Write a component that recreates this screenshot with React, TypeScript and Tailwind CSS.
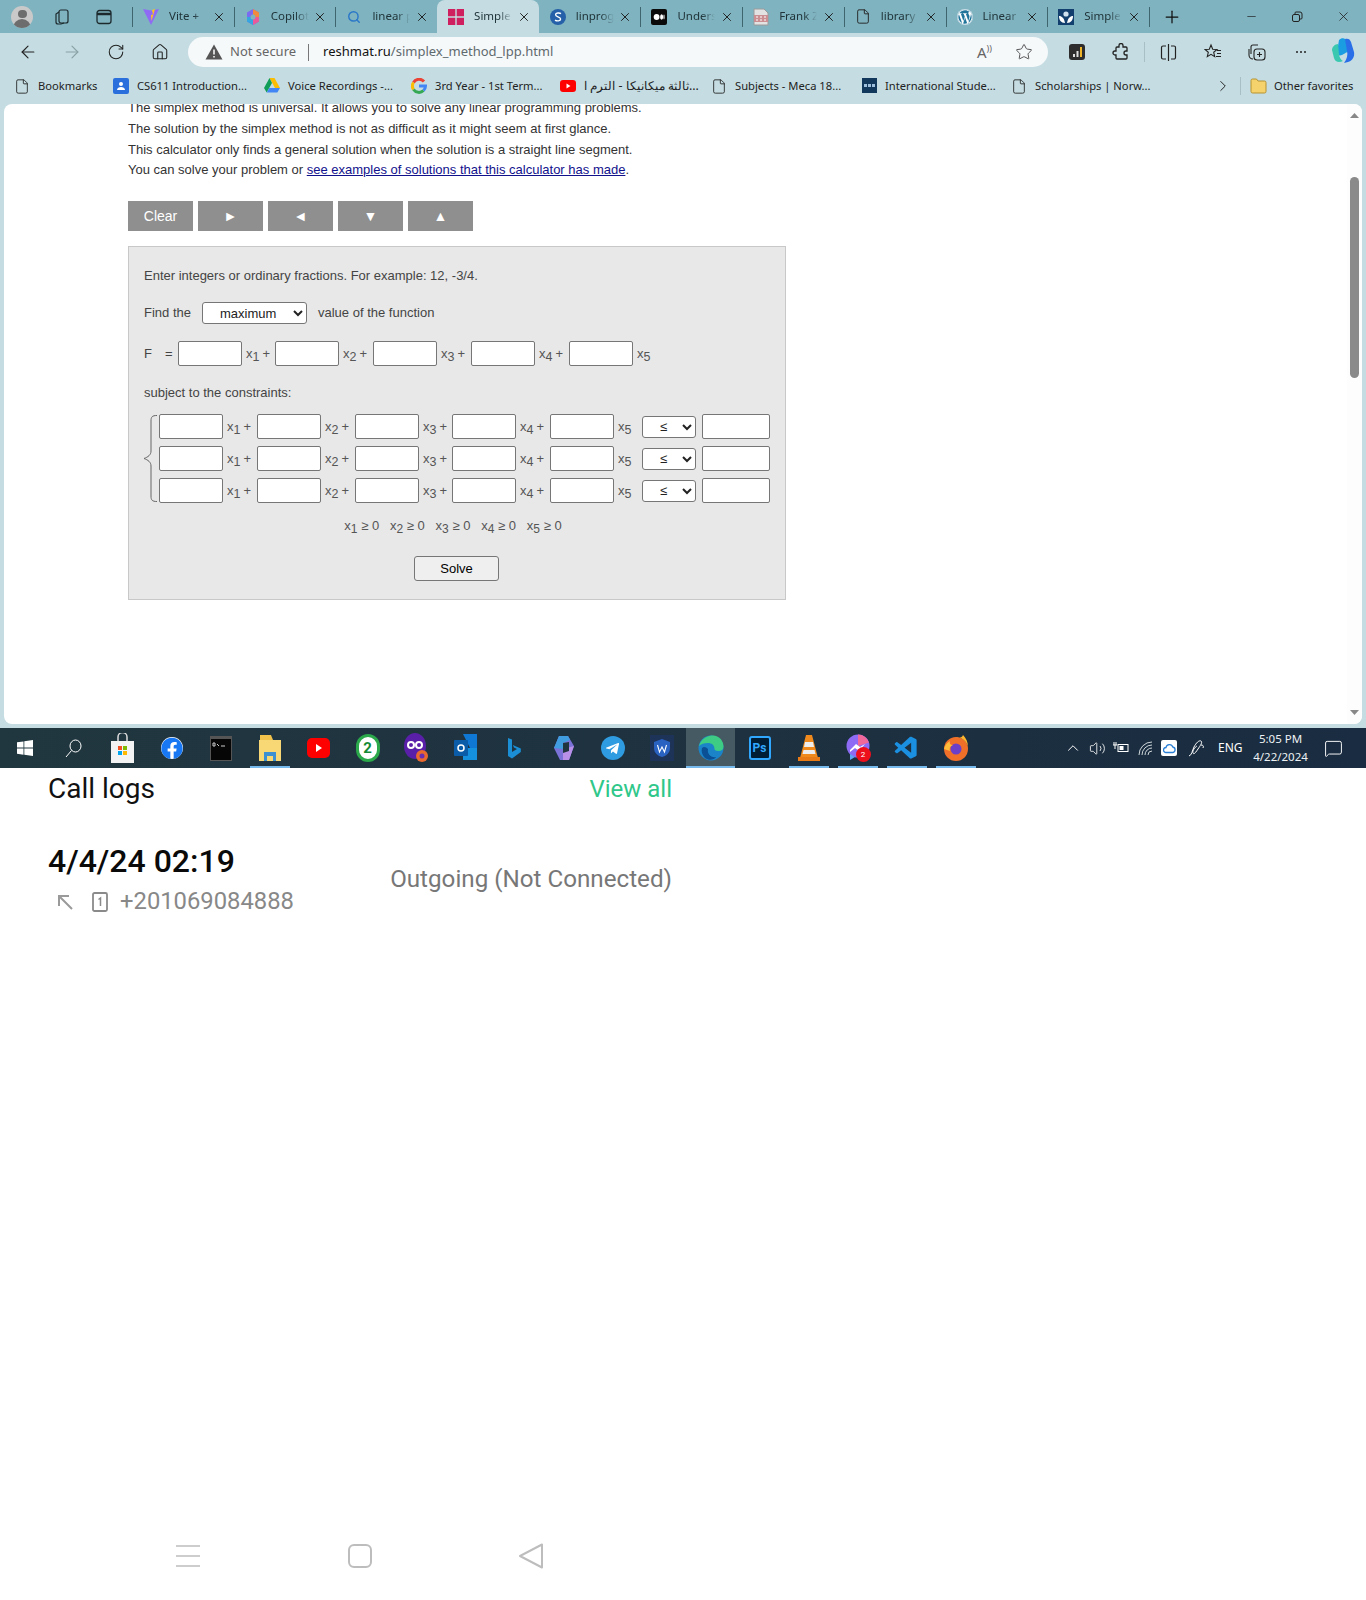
import React from "react";
import { ArrowLeft, ArrowRight, RotateCw, Home, Star, Plus, Minus, X, Search, ChevronRight, ChevronUp, File, MessageSquare, Volume2 } from "lucide-react";
import { FaFacebook, FaWordpress, FaTelegramPlane } from "react-icons/fa";
import { VscVscode } from "react-icons/vsc";

const ui = "font-['Noto_Sans',sans-serif]";

function Vite() {
  return (
    <svg width="16" height="18" viewBox="0 0 16 18">
      <path d="M0 1l8 1.5L16 1 8 17z" fill="#8f6bf5" />
      <path d="M9 2l3-1-3.5 12-.5-6 2-.5z" fill="#ffc517" />
    </svg>
  );
}
function CopilotColor({ s = 16 }: { s?: number }) {
  return (
    <svg width={s} height={s} viewBox="0 0 16 16">
      <path d="M8 0l6 3.5v9L8 16l-6-3.5v-9z" fill="#7a6bf0" />
      <path d="M8 0l6 3.5V8H8z" fill="#f08a3c" />
      <path d="M2 8h6v8l-6-3.5z" fill="#35a6e0" />
      <path d="M8 8h6v4.5L8 16z" fill="#e85a9a" />
      <circle cx="8" cy="8" r="2.5" fill="#7fb3bf" />
    </svg>
  );
}
function Squares() {
  return (
    <svg width="16" height="16" viewBox="0 0 16 16">
      <path d="M0 0h7.3v7.3H0zM8.7 0H16v7.3H8.7zM0 8.7h7.3V16H0zM8.7 8.7H16V16H8.7z" fill="#cf1f5e" />
    </svg>
  );
}
function LinProg() {
  return (
    <svg width="16" height="16" viewBox="0 0 16 16">
      <circle cx="8" cy="8" r="8" fill="#2560a8" />
      <path d="M11 4.6C9.5 3.6 5.6 3.7 5.6 5.8c0 2.4 5 1.7 5 4.3 0 2.2-3.8 2.2-5.6 1" fill="none" stroke="#fff" strokeWidth="1.4" />
    </svg>
  );
}
function Medium() {
  return (
    <svg width="16" height="16" viewBox="0 0 16 16">
      <rect width="16" height="16" rx="2" fill="#0a0a0a" />
      <ellipse cx="5.6" cy="8" rx="2.9" ry="3" fill="#fff" />
      <ellipse cx="10.6" cy="8" rx="1.5" ry="2.8" fill="#fff" />
      <ellipse cx="13" cy="8" rx=".6" ry="2.4" fill="#fff" />
    </svg>
  );
}
function Pdf() {
  return (
    <svg width="16" height="18" viewBox="0 0 16 18">
      <path d="M1 1h10l4 4v12H1z" fill="#e2e2e2" stroke="#9a9a9a" />
      <rect x="1" y="7" width="14" height="7" fill="#c98f93" />
      <path d="M3 9h2M7 9h2M11 9h2M3 12h2M7 12h2M11 12h2" stroke="#fff" />
    </svg>
  );
}
function Emblem() {
  return (
    <svg width="16" height="16" viewBox="0 0 16 16">
      <rect width="16" height="16" fill="#123f6d" />
      <path d="M1 7c3 0 5 2 6 7-4 0-6-3-6-7zM15 7c-3 0-5 2-6 7 4 0 6-3 6-7z" fill="#fff" />
      <circle cx="8" cy="5" r="2.6" fill="#cfe0ee" />
    </svg>
  );
}

const tabs: { t: string; i: React.ReactNode; active?: boolean }[] = [
  { t: "Vite +", i: <Vite /> },
  { t: "Copilot", i: <CopilotColor /> },
  { t: "linear p", i: <Search size={14} strokeWidth={2.5} color="#2b78c9" /> },
  { t: "Simple", i: <Squares />, active: true },
  { t: "linprog", i: <LinProg /> },
  { t: "Unders", i: <Medium /> },
  { t: "Frank Z", i: <Pdf /> },
  { t: "library", i: <File size={17} strokeWidth={1.4} color="#222" /> },
  { t: "Linear", i: <FaWordpress size={16} color="#21759b" className="bg-white rounded-full" /> },
  { t: "Simple", i: <Emblem /> },
];

function Tab({ t, i, active, hideSep }: { t: string; i: React.ReactNode; active?: boolean; hideSep?: boolean }) {
  return (
    <div className={`w-[101.7px] h-full flex items-center relative ${active ? "bg-[#c5dde2] rounded-t-lg" : ""}`}>
      {!hideSep && !active && <span className="w-px h-[20px] bg-[#3f666e]" />}
      <span className={`w-4 flex justify-center shrink-0 ${active || hideSep ? "ml-[11px]" : "ml-[10px]"}`}>{i}</span>
      <span className="ml-[10px] pb-[2px] w-[38px] overflow-hidden whitespace-nowrap text-[11.5px] text-[#20343a] [mask-image:linear-gradient(to_right,black_65%,transparent)]">{t}</span>
      <X size={14} strokeWidth={1.6} color="#1a1a1a" className="ml-auto mr-[8px]" />
    </div>
  );
}

function TabRow() {
  return (
    <div className={`${ui} h-[33px] bg-[#7fb3bf] flex items-center`}>
      <div className="ml-[11px] w-[22px] h-[22px] rounded-full bg-[#c9c9c9] overflow-hidden flex flex-col items-center">
        <span className="mt-[4px] w-[9px] h-[9px] rounded-full bg-[#6d6d6d]" />
        <span className="mt-[1px] w-[18px] h-[10px] rounded-t-full bg-[#6d6d6d]" />
      </div>
      <svg className="ml-[21px]" width="16" height="18" viewBox="0 0 16 18" fill="none" stroke="#1c2a2e" strokeWidth="1.2">
        <rect x="5" y="2" width="9" height="13" rx="2" />
        <path d="M5 4l-3 2v8a2 2 0 0 0 2 2h3l3-1" />
      </svg>
      <svg className="ml-[26px]" width="16" height="16" viewBox="0 0 16 16" fill="none" stroke="#1c2a2e" strokeWidth="1.3">
        <rect x="1" y="1.5" width="14" height="13" rx="2.5" />
        <path d="M1 5h14" strokeWidth="2.5" />
      </svg>
      <div className="ml-[20px] flex h-full">
        {tabs.map((x, n) => (
          <Tab key={n} {...x} hideSep={n === 4} />
        ))}
      </div>
      <span className="w-px h-[20px] bg-[#3f666e]" />
      <Plus size={20} strokeWidth={1.5} color="#111" className="ml-[12px]" />
      <Minus size={13} strokeWidth={1.3} color="#222" className="ml-[63px]" />
      <svg className="ml-[33px]" width="12" height="12" viewBox="0 0 12 12" fill="none" stroke="#222">
        <rect x="1.5" y="3.5" width="7" height="7" rx="1.5" />
        <path d="M4 3V2a1 1 0 0 1 1-1h4a2 2 0 0 1 2 2v4a1 1 0 0 1-1 1H9" />
      </svg>
      <X size={15} strokeWidth={1.3} color="#222" className="ml-[33px]" />
    </div>
  );
}

function AddressRow() {
  return (
    <div className={`${ui} h-[38px] flex items-center text-[#333]`}>
      <ArrowLeft size={20} strokeWidth={1.4} color="#222" className="ml-[18px]" />
      <ArrowRight size={20} strokeWidth={1.4} color="#8aa0a5" className="ml-[24px]" />
      <RotateCw size={18} strokeWidth={1.4} color="#222" className="ml-[25px]" />
      <Home size={18} strokeWidth={1.4} color="#222" className="ml-[26px]" />
      <div className="ml-[19px] w-[860px] h-[30px] rounded-full bg-[#f6f9fa] flex items-center">
        <svg className="ml-[17px]" width="18" height="16" viewBox="0 0 18 16">
          <path d="M9 .5L17.5 15.5H.5z" fill="#555" />
          <path d="M9 5.5v5M9 12v1.6" stroke="#fff" strokeWidth="1.5" />
        </svg>
        <span className="ml-[7px] text-[13px] text-[#666]">Not secure</span>
        <span className="ml-[12px] w-px h-[17px] bg-[#777]" />
        <span className="ml-[14px] text-[13px] text-[#5f6a6e]"><span className="text-[#111]">reshmat.ru</span>/simplex_method_lpp.html</span>
        <span className="ml-auto text-[15px] text-[#666] leading-none">A<span className="text-[9px] align-super">))</span></span>
        <Star size={18} strokeWidth={1.2} color="#444" className="ml-[23px] mr-[15px]" />
      </div>
      <svg className="ml-[21px]" width="16" height="18" viewBox="0 0 16 18">
        <rect y="1" width="16" height="16" rx="3" fill="#2d2d2d" />
        <path d="M4 11h2v3H4zM7.5 8h2v6h-2z" fill="#ddd" />
        <path d="M11 4h2v10h-2z" fill="#f0b429" />
      </svg>
      <svg className="ml-[27px]" width="18" height="18" viewBox="0 0 18 18" fill="none" stroke="#222" strokeWidth="1.3">
        <path d="M7 2.500a2 2 0 0 1 4 0V4h3a1 1 0 0 1 1 1v3h-1a2 2 0 0 0 0 4h1v3a1 1 0 0 1-1 1H5a1 1 0 0 1-1-1v-3H3a2 2 0 0 1 0-4h1V5a1 1 0 0 1 1-1h2z" />
      </svg>
      <span className="ml-[14px] w-px h-[20px] bg-[#a8c0c5]" />
      <svg className="ml-[15px]" width="17" height="17" viewBox="0 0 17 17" fill="none" stroke="#222" strokeWidth="1.2">
        <path d="M6 2H3a1.5 1.5 0 0 0-1.5 1.5v10A1.5 1.5 0 0 0 3 15h3M11 2h3a1.5 1.5 0 0 1 1.5 1.5v10A1.5 1.5 0 0 1 14 15h-3M8.5 0v17" />
      </svg>
      <svg className="ml-[27px]" width="18" height="18" viewBox="0 0 18 18" fill="none" stroke="#222" strokeWidth="1.1">
        <path d="M7 2l1.700 4.200 4.300.3-3.300 2.800 1 4.300L7 11.300 3.300 13.600l1-4.300L1 6.500l4.300-.3z" />
        <path d="M13 7.500h4M13 10.500h4M12 13.500h5" />
      </svg>
      <svg className="ml-[26px]" width="18" height="18" viewBox="0 0 18 18" fill="none" stroke="#222" strokeWidth="1.1">
        <path d="M3 11V4a2 2 0 0 1 2-2h5M1 6v6a4 4 0 0 0 4 4" />
        <rect x="6" y="6" width="11" height="11" rx="3" />
        <path d="M11.500 9v5M9 11.500h5" />
      </svg>
      <span className="ml-[30px] flex gap-[2px]">
        <i className="w-[2px] h-[2px] bg-[#222] rounded-full" />
        <i className="w-[2px] h-[2px] bg-[#222] rounded-full" />
        <i className="w-[2px] h-[2px] bg-[#222] rounded-full" />
      </span>
      <svg className="ml-[25px]" width="25" height="30" viewBox="0 0 25 30">
        <path d="M8 3c3-3 7-2 8 2l2 9-7 4c-3 1-5 0-5-3z" fill="#1b9de2" />
        <path d="M14 2c3-1 5 0 6 3l3 10c1 5-2 9-6 10l-4 1c3-4 4-8 3-12z" fill="#2a6fe8" />
        <path d="M1 13c0-3 3-6 6-6l1 10c0 3 2 6 4 7-4 2-8 1-9-3z" fill="#3ac9b0" />
      </svg>
    </div>
  );
}

function Bm({ w, i, t, s = "text-[11.2px]" }: { w: string; i: React.ReactNode; t: string; s?: string }) {
  return (
    <div className={`${w} flex items-center shrink-0`}>
      <span className="w-4 flex justify-center shrink-0">{i}</span>
      <span className={`ml-2 ${s} text-[#222] whitespace-nowrap`}>{t}</span>
    </div>
  );
}
const FileI = <File size={17} strokeWidth={1.3} color="#222" />;

function BookmarkRow() {
  return (
    <div className={`${ui} h-[33px] pb-[3px] flex items-center pl-[14px]`}>
      <Bm w="w-[99px]" i={FileI} t="Bookmarks" />
      <Bm w="w-[151px]" t="CS611 Introduction..." i={
        <svg width="16" height="16" viewBox="0 0 16 16"><rect width="16" height="16" rx="2" fill="#2a6fdb" /><circle cx="8" cy="6" r="2" fill="#fff" /><path d="M4 12c0-4 8-4 8 0z" fill="#fff" /></svg>
      } />
      <Bm w="w-[147px]" t="Voice Recordings -..." i={
        <svg width="16" height="15" viewBox="0 0 16 15"><path d="M5.500 0h5L16 10h-5z" fill="#fbbc04" /><path d="M5.500 0L0 10l2.700 4.500L8 5z" fill="#0f9d58" /><path d="M2.700 14.500h10.600L16 10H5.300z" fill="#4285f4" /></svg>
      } />
      <Bm w="w-[149px]" t="3rd Year - 1st Term..." i={
        <svg width="16" height="16" viewBox="0 0 16 16" fill="none" strokeWidth="3"><path d="M13 3.500A6.500 6.500 0 0 0 2.500 4.500" stroke="#ea4335" /><path d="M2.500 4.500a6.500 6.500 0 0 0 0 7" stroke="#fbbc04" /><path d="M2.500 11.500a6.500 6.500 0 0 0 10 1" stroke="#34a853" /><path d="M12.500 12.500A6.500 6.500 0 0 0 14.500 8H8" stroke="#4285f4" /></svg>
      } />
      <Bm w="w-[151px]" s="text-[12.4px]" t="ثالثة ميكانيكا - الترم ا..." i={
        <svg width="16" height="12" viewBox="0 0 16 12"><rect width="16" height="12" rx="3" fill="#f00" /><path d="M6.500 3.500l4 2.500-4 2.500z" fill="#fff" /></svg>
      } />
      <Bm w="w-[150px]" i={FileI} t="Subjects - Meca 18..." />
      <Bm w="w-[150px]" t="International Stude..." i={
        <svg width="15" height="15" viewBox="0 0 15 15"><rect width="15" height="15" fill="#12395b" /><path d="M2 7.500h11" stroke="#9fc0dd" strokeWidth="3" strokeDasharray="3 1" /></svg>
      } />
      <Bm w="w-[203px]" i={FileI} t="Scholarships | Norw..." />
      <ChevronRight size={18} strokeWidth={1.3} color="#222" />
      <span className="ml-[8px] w-px h-[18px] bg-[#a8c0c5]" />
      <svg className="ml-[9px]" width="17" height="16" viewBox="0 0 17 16">
        <path d="M1 2.500A1.500 1.500 0 0 1 2.500 1h4L8 3h6.500A1.500 1.500 0 0 1 16 4.500v9a1.500 1.500 0 0 1-1.500 1.500h-12A1.500 1.500 0 0 1 1 13.500z" fill="#f5d26b" stroke="#b59233" />
      </svg>
      <span className="ml-[7px] text-[11.2px] text-[#222] whitespace-nowrap">Other favorites</span>
    </div>
  );
}

function Box({ w = "w-[64px]" }: { w?: string }) {
  return <input className={`${w} h-[25px] shrink-0 bg-white border border-[#767676] rounded-[2px]`} />;
}
function V({ n, plus, w }: { n: number; plus?: boolean; w: string }) {
  return (
    <span className={`${w} shrink-0 pl-[4px] text-[13px] text-[#555] whitespace-nowrap`}>
      x<sub className="text-[12.5px]">{n}</sub>{plus && <span className="ml-[3px]">+</span>}
    </span>
  );
}
function Rel() {
  return (
    <select className="w-[54px] h-[22px] shrink-0 bg-white border border-[#767676] rounded-[3px] pl-[13px] text-[13px] text-[#222]">
      <option>≤</option>
    </select>
  );
}
function Row() {
  return (
    <div className="flex items-center h-[25px]">
      <Box /><V n={1} plus w="w-[34px]" />
      <Box /><V n={2} plus w="w-[34px]" />
      <Box /><V n={3} plus w="w-[33px]" />
      <Box /><V n={4} plus w="w-[34px]" />
      <Box /><V n={5} w="w-[28px]" />
      <Rel />
      <span className="w-[6px] shrink-0" />
      <Box w="w-[68px]" />
    </div>
  );
}
function Nn({ n }: { n: number }) {
  return <>x<sub className="text-[12px]">{n}</sub> ≥ 0</>;
}

function Web() {
  const btn = "w-[65px] h-[30px] bg-[#8f8f8f] text-white text-[14px] flex items-center justify-center";
  return (
    <div className="mx-[4px] h-[620px] bg-white rounded-lg overflow-hidden flex font-['Liberation_Sans',sans-serif]">
      <div className="flex-1 pl-[124px] overflow-hidden">
        <div className="-mt-[6px] text-[13px] leading-[20.8px] text-[#333]">
          <p className="whitespace-nowrap">The simplex method is universal. It allows you to solve any linear programming problems.</p>
          <p className="whitespace-nowrap">The solution by the simplex method is not as difficult as it might seem at first glance.</p>
          <p className="whitespace-nowrap">This calculator only finds a general solution when the solution is a straight line segment.</p>
          <p className="whitespace-nowrap">You can solve your problem or <a className="underline text-[#11118c]">see examples of solutions that this calculator has made</a>.</p>
        </div>
        <div className="mt-[20px] flex gap-[5px]">
          <div className={btn}>Clear</div>
          <div className={btn}>►</div>
          <div className={btn}>◄</div>
          <div className={btn}>▼</div>
          <div className={btn}>▲</div>
        </div>
        <div className="mt-[15px] w-[658px] h-[354px] bg-[#e8e8e8] border border-[#c8c8c8] px-[15px] text-[13px] text-[#444]">
          <div className="mt-[19px] h-5 leading-5">Enter integers or ordinary fractions. For example: 12, -3/4.</div>
          <div className="mt-[16px] flex items-center h-[22px]">
            <span className="w-[58px]">Find the</span>
            <select className="w-[105px] h-[22px] bg-white border border-[#767676] rounded-[3px] pl-[13px] text-[13px] text-[#222]">
              <option>maximum</option>
            </select>
            <span className="ml-[11px]">value of the function</span>
          </div>
          <div className="mt-[17px] flex items-center h-[25px]">
            <span className="w-[21px]">F</span>
            <span className="w-[13px]">=</span>
            <Box /><V n={1} plus w="w-[33px]" />
            <Box /><V n={2} plus w="w-[34px]" />
            <Box /><V n={3} plus w="w-[34px]" />
            <Box /><V n={4} plus w="w-[34px]" />
            <Box /><V n={5} w="w-[30px]" />
          </div>
          <div className="mt-[17px] h-5 leading-5">subject to the constraints:</div>
          <div className="mt-[11px] flex">
            <svg width="17" height="89" viewBox="0 0 17 89" fill="none" stroke="#666" className="shrink-0 -ml-[2px]">
              <path d="M15 1.500C10 1.500 9 3 9 7v30c0 4-3 6-7 7.500 4 1.500 7 3.500 7 7.500v30c0 4 1 5.500 6 5.500" />
            </svg>
            <div className="flex flex-col gap-[7px]">
              <Row /><Row /><Row />
            </div>
          </div>
          <div className="mt-[13px] h-5 leading-5 pr-[8px] text-center text-[13px] text-[#555] whitespace-pre">
            <Nn n={1} />{"   "}<Nn n={2} />{"   "}<Nn n={3} />{"   "}<Nn n={4} />{"   "}<Nn n={5} />
          </div>
          <div className="mt-[20px] flex justify-center">
            <button className="w-[85px] h-[25px] bg-[#efefef] border border-[#767676] rounded-[3px] text-[13px] text-black -ml-[1px]">Solve</button>
          </div>
        </div>
      </div>
      <div className="w-[15px] bg-[#fdfdfd] flex flex-col items-center">
        <svg className="mt-[9px]" width="9" height="5" viewBox="0 0 9 5"><path d="M4.500 0L9 5H0z" fill="#888" /></svg>
        <div className="mt-[59px] w-[9px] h-[201px] rounded-[5px] bg-[#8a8a8a]" />
        <svg className="mt-auto mb-[9px]" width="9" height="5" viewBox="0 0 9 5"><path d="M4.500 5L9 0H0z" fill="#888" /></svg>
      </div>
    </div>
  );
}

const TI = ({ c, u }: { c: React.ReactNode; u?: boolean }) => (
  <div className="w-[49px] h-full flex items-center justify-center relative shrink-0">
    {c}
    {u && <span className="absolute bottom-0 left-[5px] w-[40px] h-[2px] bg-[#76b9ed]" />}
  </div>
);

function CopilotBig() {
  return (
    <svg width="22" height="26" viewBox="0 0 22 26">
      <path d="M6 1h9l6 10-5 14H7L1 13z" fill="#7b72d8" />
      <path d="M6 1h9l2 4-7 3v6l-9-1z" fill="#3f9de0" />
      <path d="M10 14l11-3-5 14H10z" fill="#b890e8" />
      <path d="M10 8l6-1v9l-6 2z" fill="#1f3640" />
    </svg>
  );
}
function EdgeI() {
  return (
    <svg width="26" height="26" viewBox="0 0 26 26">
      <circle cx="13" cy="13" r="12.500" fill="#1b84c9" />
      <path d="M1 11C3 3 10 .5 15 .5c6 0 10.500 5 10.500 11 0 3-2 4.500-5 4.500-2.500 0-4-1-4-2 0-4-3-6-6.500-6C6 8 3 9 1 11z" fill="#3ecb84" />
      <path d="M10 14c-1 5 3 9 8 8-2 3-7 4-11 1-3-3-4-7-3-10 2-2 4-1 6 1z" fill="#0b4f94" />
    </svg>
  );
}

const taskIcons: { c: React.ReactNode; u?: boolean }[] = [
  { c: <svg width="16" height="16" viewBox="0 0 16 16"><path d="M0 2.300l6.500-.9v6.200H0zM7.300 1.300L16 0v7.600H7.300zM0 8.400h6.500v6.300L0 13.700zM7.300 8.400H16V16l-8.700-1.200z" fill="#fff" /></svg> },
  { c: <svg width="17" height="19" viewBox="0 0 17 19" fill="none" stroke="#fff" strokeWidth="1"><ellipse cx="10.500" cy="7" rx="5.500" ry="6" /><path d="M6.500 11.500L1 18" /></svg> },
  { c: <svg width="23" height="30" viewBox="0 0 23 30"><rect y="8" width="23" height="22" fill="#f3f3f3" /><path d="M7 8V4a4 4 0 0 1 9 0v4" fill="none" stroke="#ddd" strokeWidth="1.500" /><path d="M7 13h4v4H7z" fill="#f25022" /><path d="M12 13h4v4h-4z" fill="#7fba00" /><path d="M7 18h4v4H7z" fill="#00a4ef" /><path d="M12 18h4v4h-4z" fill="#ffb900" /></svg> },
  { c: <span className="bg-white rounded-full w-[22px] h-[22px] flex items-center justify-center"><FaFacebook size={25} color="#1877f2" /></span> },
  { c: <svg width="22" height="25" viewBox="0 0 22 25"><rect width="22" height="25" fill="#555" /><rect x="1" y="3" width="20" height="21" fill="#060606" /><path d="M3 7h2v3H3zM7 8l2 2M11 10h4" stroke="#ccc" fill="none" /></svg> },
  { c: <svg width="22" height="26" viewBox="0 0 22 26"><path d="M1 0h11l2 5H1z" fill="#f0c14b" /><path d="M0 5h22v21H0z" fill="#f8d775" /><path d="M5 17h12v9H5z" fill="#3c8fd0" /><path d="M8 21h6v5H8z" fill="#f8d775" /></svg>, u: true },
  { c: <svg width="23" height="20" viewBox="0 0 23 20"><rect width="23" height="20" rx="5" fill="#f00" /><path d="M9 6l6 4-6 4z" fill="#fff" /></svg> },
  { c: <span className="w-[24px] h-[28px] rounded-full bg-white border-[3px] border-[#2aa84a] flex items-center justify-center text-[#148a35] text-[15px] font-bold font-['Roboto',sans-serif]">2</span> },
  { c: <svg width="26" height="30" viewBox="0 0 26 30"><ellipse cx="11" cy="13" rx="11" ry="13" fill="#5a1fa8" /><circle cx="7" cy="12" r="3" fill="none" stroke="#fff" strokeWidth="2" /><circle cx="15" cy="12" r="3" fill="none" stroke="#fff" strokeWidth="2" /><circle cx="18" cy="23" r="6" fill="#e8682f" /><circle cx="18" cy="23" r="2.500" fill="#6a2fb0" /></svg> },
  { c: <svg width="24" height="28" viewBox="0 0 24 28"><path d="M9 0h14v14l-6 2z" fill="#0f78d4" /><path d="M9 14l14 0v12H9z" fill="#1490df" /><rect y="6" width="14" height="16" rx="1" fill="#0a5ba8" /><circle cx="7" cy="14" r="3" fill="none" stroke="#fff" strokeWidth="1.500" /></svg> },
  { c: <svg width="13" height="21" viewBox="0 0 13 21"><path d="M0 0l4 1.500v12.500l5-3-3-1.500L4.800 7l8 3.500v3.500L4 20.500 0 18z" fill="#1a8fd6" /></svg> },
  { c: <CopilotBig /> },
  { c: <span className="w-[24px] h-[24px] rounded-full bg-[#2f9be0] flex items-center justify-center"><FaTelegramPlane size={15} color="#fff" /></span> },
  { c: <svg width="24" height="26" viewBox="0 0 24 26"><rect width="24" height="26" fill="#1d3358" /><path d="M12 4l8 3v6c0 5-4 8-8 9-4-1-8-4-8-9V7z" fill="#2a62c2" /><path d="M7.500 10l2 7 2.500-5 2.500 5 2-7" fill="none" stroke="#fff" strokeWidth="1.100" /></svg> },
  { c: <EdgeI />, u: false },
  { c: <span className="w-[22px] h-[24px] rounded-[3px] bg-[#001e36] border-2 border-[#31a8ff] text-[#31a8ff] text-[12px] font-bold flex items-center justify-center font-['Roboto',sans-serif]">Ps</span> },
  { c: <svg width="22" height="26" viewBox="0 0 22 26"><path d="M8 0h6l6 23H2z" fill="#f08a1d" /><path d="M7 7h8l1 5H6zM5.500 15h11l1 4h-13z" fill="#eee" /><path d="M0 22h22v4H0z" fill="#e87b15" /></svg>, u: true },
  { c: <span className="relative"><svg width="24" height="28" viewBox="0 0 24 28"><circle cx="12" cy="12" r="11.500" fill="#8d6bf5" /><path d="M12 .5a11.500 11.500 0 0 1 11 8L12 12z" fill="#f0689a" /><path d="M4 16l6-6 4 3 5-3-6 7-4-3-5 4z" fill="#fff" /><path d="M4 20v6l5-3z" fill="#5fa5f5" /></svg><span className="absolute left-[10px] top-[13px] w-[15px] h-[15px] rounded-full bg-[#ee0f1c] text-white text-[8px] flex items-center justify-center font-['Roboto',sans-serif]">2</span></span>, u: true },
  { c: <VscVscode size={27} color="#1b8fe0" />, u: true },
  { c: <svg width="24" height="26" viewBox="0 0 24 26"><circle cx="12" cy="14" r="12" fill="#f0702a" /><path d="M12 2c5 0 11 4 12 10 0-5-2-9-5-12-1 3-4 3-7 2z" fill="#ffb52e" /><circle cx="12" cy="14" r="5.500" fill="#6b3fc8" /><path d="M0 14c1-4 3-6 6-8-1 3 1 4 3 4-3 1-4 3-3 6z" fill="#ffbd3a" /></svg>, u: true },
];

function Taskbar() {
  return (
    <div className={`${ui} h-10 flex items-center bg-[linear-gradient(90deg,#21373f,#1a2c41)]`}>
      <div className="flex h-full">
        {taskIcons.map((x, n) => (
          <div key={n} className={n === 14 ? "bg-[#465a64] relative" : ""}>
            <TI c={x.c} u={x.u} />
            {n === 14 && <span className="absolute bottom-0 left-0 w-full h-[2px] bg-[#76b9ed]" />}
          </div>
        ))}
      </div>
      <ChevronUp size={18} strokeWidth={1.300} color="#fff" className="ml-[84px]" />
      <Volume2 size={17} strokeWidth={1.200} color="#fff" className="ml-[7px]" />
      <svg className="ml-[7px]" width="16" height="12" viewBox="0 0 16 12" fill="none" stroke="#fff">
        <rect x="5" y="2.500" width="10" height="7" />
        <path d="M0 3h4M1 0v3M3 0v3M2 3v4" />
        <rect x="6.500" y="4" width="4" height="4" fill="#fff" stroke="none" />
      </svg>
      <svg className="ml-[9px]" width="15" height="15" viewBox="0 0 15 15" fill="none" stroke="#cfd6da">
        <path d="M1 14A13 13 0 0 1 14 1M4 14A10 10 0 0 1 14 4M7 14A7 7 0 0 1 14 7M10 14a4 4 0 0 1 4-4" />
      </svg>
      <span className="ml-[8px] w-[16px] h-[16px] bg-white rounded-[2px] flex items-center justify-center">
        <svg width="13" height="13" viewBox="0 0 13 13" fill="none" stroke="#2a7fd5" strokeWidth="1.300"><path d="M3 10.500a2.500 2.500 0 0 1 0-5 3.500 3.500 0 0 1 6.800-.5 2.800 2.800 0 0 1 0 5.500z" /></svg>
      </span>
      <svg className="ml-[11px]" width="17" height="18" viewBox="0 0 17 18" fill="none" stroke="#fff">
        <path d="M1 17c3-1 3-5 5-9s5-7 7-6-1 5-3 8-4 6-5 4 2-6 4-7M13 6c2 0 3 1 2 3" />
      </svg>
      <span className="ml-[13px] text-[12px] text-white">ENG</span>
      <div className="ml-[11px] w-[54px] flex flex-col items-center text-[11.500px] leading-[18px] text-[#eef2f4] whitespace-nowrap">
        <span>5:05 PM</span>
        <span>4/22/2024</span>
      </div>
      <MessageSquare size={19} strokeWidth={1.200} color="#fff" className="ml-[16px]" />
    </div>
  );
}

function Mobile() {
  return (
    <div className="bg-white font-['Roboto',sans-serif]">
      <div className="pt-[1px] h-[41px] pl-[48px] w-[672px] flex items-center justify-between">
        <span className="text-[28px] text-[#111]">Call logs</span>
        <span className="text-[24px] text-[#2fc78a]">View all</span>
      </div>
      <div className="mt-[32px] pl-[48px] w-[672px] flex items-center justify-between">
        <div className="flex flex-col">
          <div className="h-10 flex items-center text-[32px] font-medium text-[#0a0a0a]">4/4/24 02:19</div>
          <div className="mt-[3px] h-9 flex items-center text-[23.8px] text-[#888]">
            <svg className="ml-[9px]" width="17" height="17" viewBox="0 0 17 17" fill="none" stroke="#9a9a9a" strokeWidth="2">
              <path d="M2 12V2h10M2 2l13 13" />
            </svg>
            <svg className="ml-[17px]" width="18" height="20" viewBox="0 0 18 20" fill="none" stroke="#8a8a8a" strokeWidth="1.800">
              <path d="M2 2.500A1.500 1.500 0 0 1 3.500 1h11A1.500 1.500 0 0 1 16 2.500v15a1.500 1.500 0 0 1-1.500 1.500h-11A1.500 1.500 0 0 1 2 17.500z" />
              <path d="M7.500 7.500L9.500 6v8" strokeWidth="1.500" />
            </svg>
            <span className="ml-[11px]">+201069084888</span>
          </div>
        </div>
        <span className="pb-[2px] text-[24.2px] text-[#777]">Outgoing (Not Connected)</span>
      </div>
      <div className="mt-[623px] pl-[176px] flex items-center h-[26px]">
        <svg width="24" height="26" viewBox="0 0 24 26" fill="none" stroke="#bdbdbd" strokeWidth="1.700">
          <path d="M0 3h24M0 13h24M0 23h24" />
        </svg>
        <svg className="ml-[148px]" width="24" height="26" viewBox="0 0 24 26" fill="none" stroke="#bdbdbd" strokeWidth="2">
          <rect x="1" y="2" width="22" height="22" rx="5" />
        </svg>
        <svg className="ml-[147px]" width="24" height="26" viewBox="0 0 24 26" fill="none" stroke="#bdbdbd" strokeWidth="2" strokeLinejoin="round">
          <path d="M23 1.500v23L1 13z" />
        </svg>
      </div>
    </div>
  );
}

export default function App() {
  return (
    <div className="w-[1366px] min-h-[1600px] bg-white overflow-hidden">
      <div className="bg-[#c5dde2]">
        <TabRow />
        <AddressRow />
        <BookmarkRow />
        <Web />
        <div className="h-[4px]" />
      </div>
      <Taskbar />
      <Mobile />
    </div>
  );
}
